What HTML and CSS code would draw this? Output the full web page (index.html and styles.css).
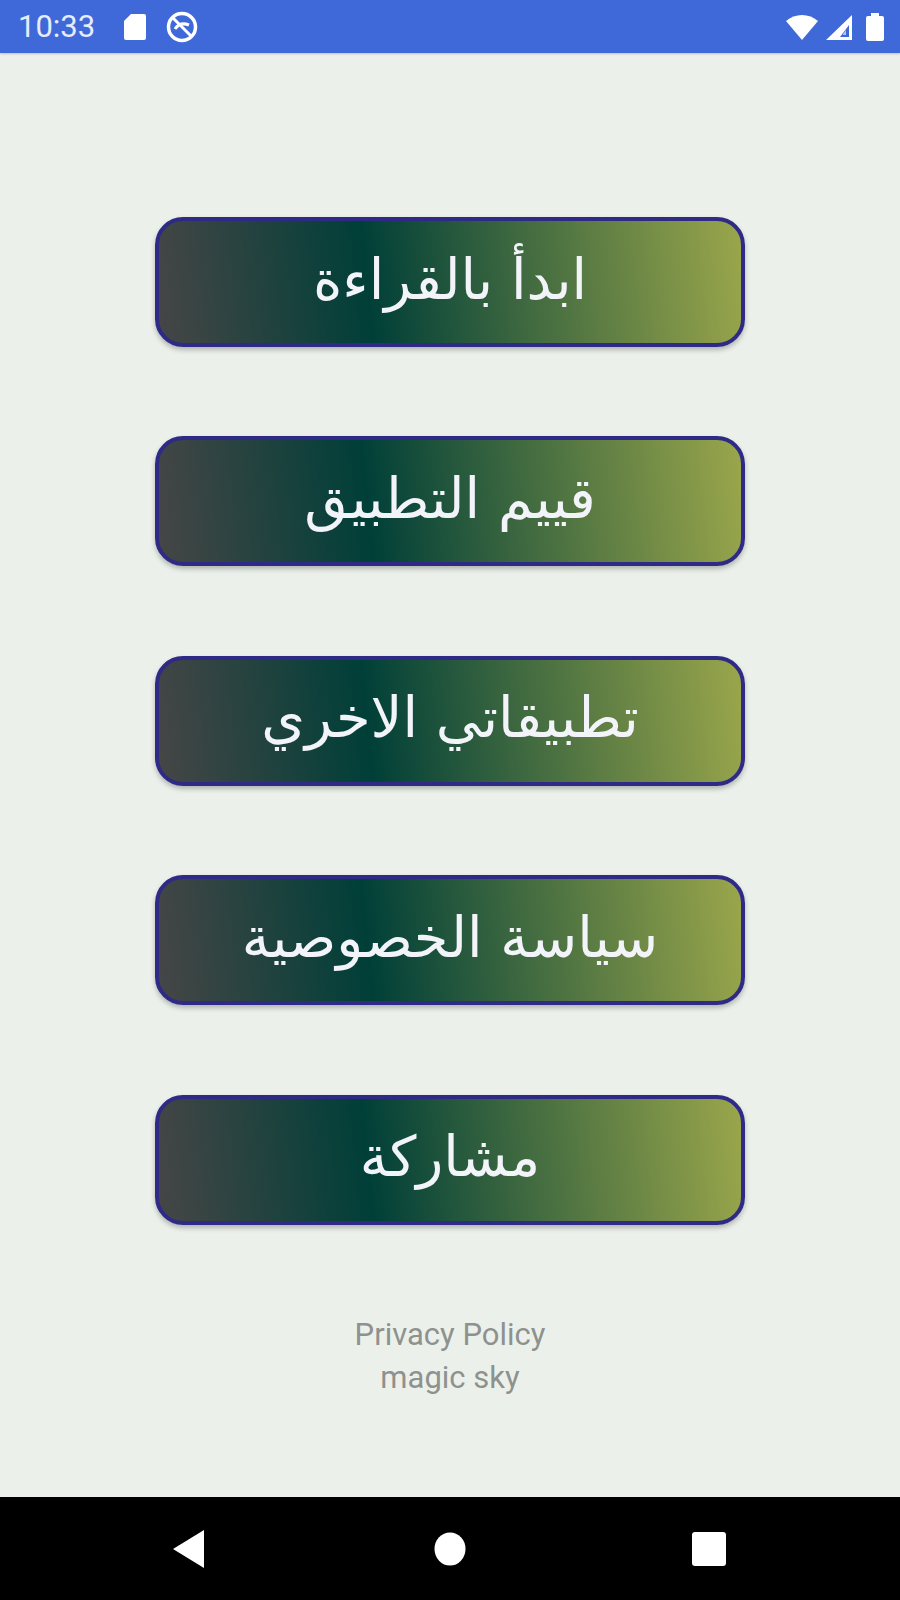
FILE: index.html
```html
<!DOCTYPE html>
<html>

<head>
    <meta charset="UTF-8" />
    <meta name="viewport" content="width=device-width, initial-scale=1">
    <title>Menu</title>
    <link rel="stylesheet" href="styles.css">
</head>

<body>
    <div class="status-bar">
        <span class="clock">10:33</span>
        <svg class="icon-sd" width="26" height="30" viewBox="0 0 26 30">
            <path d="M9 2h13a2 2 0 0 1 2 2v22a2 2 0 0 1-2 2H4a2 2 0 0 1-2-2V9z" fill="#fff" />
        </svg>
        <svg class="icon-block" width="34" height="34" viewBox="0 0 34 34">
            <circle cx="17" cy="17" r="13.5" fill="none" stroke="#fff" stroke-width="3.5" />
            <path d="M8 8l18 18" stroke="#fff" stroke-width="3" />
            <path d="M10 19c4-6 9-6 14-4" fill="none" stroke="#fff" stroke-width="3" />
        </svg>
        <span class="spacer"></span>
        <svg class="icon-wifi" width="34" height="28" viewBox="0 0 34 28">
            <path d="M1 8C10 0 24 0 33 8L17 27z" fill="#fff" />
        </svg>
        <svg class="icon-signal" width="30" height="28" viewBox="0 0 30 28">
            <path d="M28 2v25H2zM25 12L16 24h9z" fill="#fff" fill-rule="evenodd" />
            <path d="M19 21l3-4v5h-3z" fill="#fff" opacity="0.6" />
        </svg>
        <svg class="icon-battery" width="20" height="30" viewBox="0 0 20 30">
            <path d="M6 1h8v3h3a2 2 0 0 1 2 2v21a2 2 0 0 1-2 2H3a2 2 0 0 1-2-2V6a2 2 0 0 1 2-2h3z" fill="#fff" />
        </svg>
    </div>

    <div class="content">
        <div class="menu">
            <button class="menu-btn">ابدأ بالقراءة</button>
            <button class="menu-btn">قييم التطبيق</button>
            <button class="menu-btn">تطبيقاتي الاخري</button>
            <button class="menu-btn">سياسة الخصوصية</button>
            <button class="menu-btn">مشاركة</button>
        </div>
        <div class="footer-links">
            <div>Privacy Policy</div>
            <div>magic sky</div>
        </div>
    </div>

    <div class="nav-bar">
        <svg width="32" height="38" viewBox="0 0 32 38">
            <path d="M31 0v38L0 19z" fill="#fff" />
        </svg>
        <svg class="nav-home" width="32" height="34" viewBox="0 0 32 34">
            <ellipse cx="16" cy="17" rx="15.5" ry="16.5" fill="#fff" />
        </svg>
        <svg width="36" height="36" viewBox="0 0 36 36">
            <rect x="1" y="1" width="34" height="34" rx="3" fill="#fff" />
        </svg>
    </div>
</body>

</html>
```
FILE: styles.css
```css
html,
body {
    margin: 0;
    height: 100%;
}

body {
    display: flex;
    flex-direction: column;
    height: 1600px;
    background-color: #ebf1ea;
    font-family: Roboto, sans-serif;
    overflow: hidden;
}

.status-bar {
    display: flex;
    align-items: center;
    height: 53px;
    padding: 0 15px 0 18px;
    box-sizing: border-box;
    background-color: #3f69d8;
    color: #fff;
    box-shadow: 0 1px 2px rgba(0, 0, 0, 0.2);
}

.clock {
    font-size: 31px;
    color: #e6ecfa;
    margin-right: 27px;
}

.icon-block {
    margin-left: 17px;
}

.spacer {
    flex: 1;
}

.icon-signal {
    margin-left: 5px;
}

.icon-battery {
    margin-left: 11px;
}

.content {
    flex: 1;
    display: flex;
    flex-direction: column;
    align-items: center;
    padding-top: 164px;
}

.menu {
    display: flex;
    flex-direction: column;
    gap: 89.4px;
}

.menu-btn {
    width: 590px;
    height: 130px;
    border: 4px solid #2f2a85;
    border-radius: 28px;
    background: linear-gradient(84deg, #464646 0%, #003f38 36%, #9aa64b 100%);
    color: #f2f4fa;
    font-family: "DejaVu Sans", sans-serif;
    font-size: 56px;
    box-shadow: 0 3px 5px rgba(0, 0, 0, 0.25);
    padding: 0 0 6px;
}

.footer-links {
    margin-top: 88px;
    text-align: center;
    font-size: 31px;
    line-height: 43px;
    color: #8f918f;
}

.nav-bar {
    display: flex;
    align-items: center;
    justify-content: center;
    gap: 227px;
    height: 103px;
    background-color: #000;
}

.nav-home {
    margin-left: 2px;
    margin-right: -2px;
}
```
